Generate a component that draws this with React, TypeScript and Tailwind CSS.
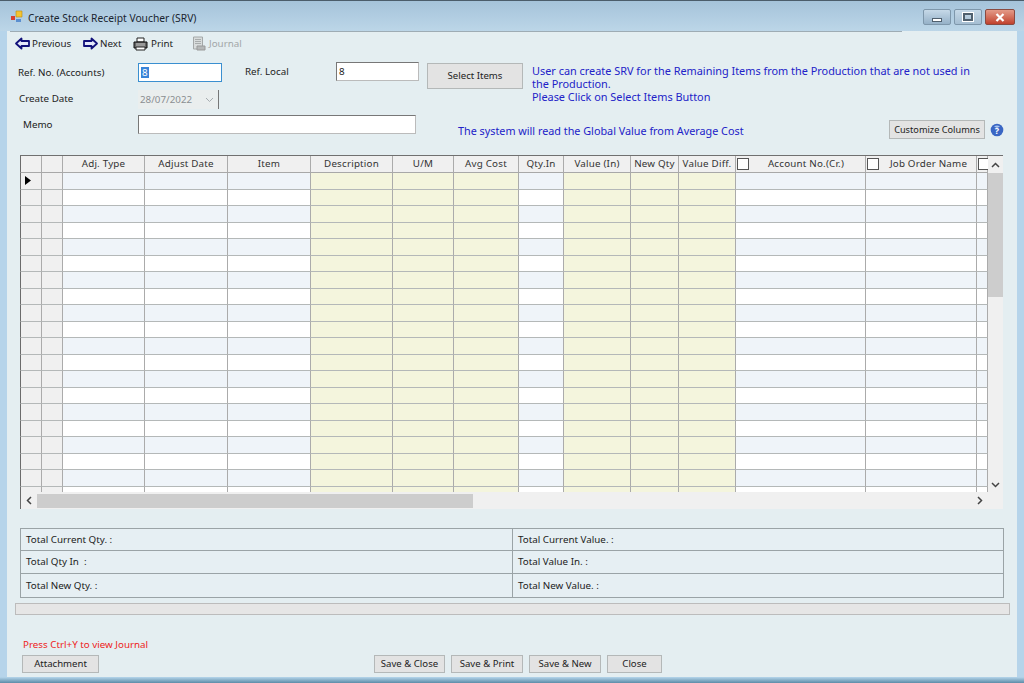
const GRID = "grid grid-cols-[22px_21px_82px_83px_83px_82px_61px_65px_45px_67px_48px_57px_130px_111px_11px]";

const heads = ["", "", "Adj. Type", "Adjust Date", "Item", "Description", "U/M", "Avg Cost", "Qty.In", "Value (In)", "New Qty", "Value Diff.", "Account No.(Cr.)", "Job Order Name", ""];
const yellow = [5, 6, 7, 9, 10, 11];

function Check({ className }: { className: string }) {
  return <span className={"block w-[12px] h-[12px] bg-white border border-[#555] shrink-0 " + className} />;
}

function Arrow({ flip }: { flip?: boolean }) {
  return (
    <svg width="15" height="13" viewBox="0 0 15 13" className={flip ? "-scale-x-100" : ""}>
      <path d="M1 6.5 6.5 1.5 V4 H14 V9 H6.5 V11.5 Z" fill="#e4e8fa" stroke="#10107a" strokeWidth="1.8" strokeLinejoin="round" />
    </svg>
  );
}

function Printer() {
  return (
    <svg width="15" height="14" viewBox="0 0 15 14">
      <path d="M4 1h7v4H4z" fill="#fff" stroke="#222" />
      <path d="M1 5h13v6H1z" fill="#666" stroke="#111" />
      <path d="M3 7h9M3 9h9" stroke="#ccc" />
      <path d="M3 10h9v3H3z" fill="#fff" stroke="#222" />
    </svg>
  );
}

function JournalIcon() {
  return (
    <svg width="14" height="15" viewBox="0 0 14 15">
      <path d="M1.5 1h9v12h-9z" fill="#d8dcdc" stroke="#a4a8a8" />
      <path d="M3 3.500h6M3 5.500h6M3 7.500h6" stroke="#a8acac" />
      <path d="M5 10h8v4H5z" fill="#b5b8b8" stroke="#999" />
    </svg>
  );
}

function Btn({ w, h = "h-[18px]", text = "text-[9.600px]", children }: { w: string; h?: string; text?: string; children: string }) {
  return (
    <div className={w + " " + h + " " + text + " flex items-center justify-center whitespace-nowrap bg-[#e3e3e3] border border-[#b4b8b8] text-[#222] shrink-0"}>
      {children}
    </div>
  );
}

function WinBtn({ className, children }: { className: string; children: React.ReactNode }) {
  return (
    <div className={"h-[16px] flex items-center justify-center rounded-[2px] border border-[#7e97ab] " + className}>{children}</div>
  );
}

function Row({ i }: { i: number }) {
  const alt = i % 2 === 0;
  return (
    <div className={GRID + " h-[16.500px] shrink-0"}>
      {heads.map((_, c) => {
        const bg = c < 2 ? "bg-[#f0f0f0]" : yellow.includes(c) ? "bg-[#f4f5dd]" : alt ? "bg-[#eff4f9]" : "bg-white";
        const left = c === 0 ? "border-l border-l-[#6b6b6b]" : "";
        return (
          <div key={c} className={bg + " " + left + " relative border-r border-b border-r-[#ababab] border-b-[#b4b8b8] flex items-center pl-[4px]"}>
            {c === 0 && i === 0 && (
              <svg width="6" height="9" viewBox="0 0 6 9"><path d="M0 0 6 4.500 0 9Z" fill="#000" /></svg>
            )}
          </div>
        );
      })}
    </div>
  );
}

function TotalCell({ text, wide, h }: { text: string; wide?: boolean; h: string }) {
  return <div className={h + (wide ? " w-[492px] border-r border-r-[#9aa3a6]" : " flex-1") + " flex items-center pl-[5px] text-[#222]"}>{text}</div>;
}

export default function App() {
  return (
    <div className="w-[1024px] h-[683px] overflow-hidden flex flex-col bg-[#b6d4ea] text-[9.800px] text-[#222] font-['Noto_Sans','DejaVu_Sans',sans-serif] leading-none">
      <div className="h-[31px] shrink-0 flex items-start border-t border-t-[#4b5d6b] bg-gradient-to-b from-[#a5c3da] to-[#bcd6e8]">
        <svg width="14" height="14" viewBox="0 0 14 14" className="ml-[10px] mt-[9px] shrink-0">
          <path d="M6 1h6v6H6z" fill="#f4c430" stroke="#b88a10" strokeWidth=".6" />
          <path d="M1 6h4v4H1z" fill="#d84030" />
          <path d="M6 9h5v3H6z" fill="#5b8fd0" />
        </svg>
        <div className="ml-[4px] mt-[12px] text-[10.300px] text-[#1a2530]">Create Stock Receipt Voucher (SRV)</div>
        <div className="ml-auto mr-[9px] mt-[8px] flex gap-[3px]">
          <WinBtn className="w-[28px] bg-gradient-to-b from-[#c6d9e8] to-[#95b1c8]">
            <span className="block w-[10px] h-[4px] mt-[5px] bg-white border border-[#50606e]" />
          </WinBtn>
          <WinBtn className="w-[28px] bg-gradient-to-b from-[#c6d9e8] to-[#a5bed2]">
            <span className="block w-[10px] h-[8px] bg-transparent border-2 border-[#50606e] outline outline-1 outline-white" />
          </WinBtn>
          <WinBtn className="w-[30px] bg-gradient-to-b from-[#e39a88] to-[#c0402c] border-[#8a4a40]">
            <svg width="10" height="9" viewBox="0 0 10 9"><path d="M1.500 1 8.500 8M8.500 1 1.500 8" stroke="#fff" strokeWidth="2.200" /></svg>
          </WinBtn>
        </div>
      </div>

      <div className="flex-1 min-h-0 flex flex-col mx-[7px] bg-[#e4eef1]">
        <div className="ml-[3px] w-[892px] h-px bg-[#9eacb4] shrink-0" />
        <div className="h-[23px] shrink-0 flex items-center pl-[8px]">
          <Arrow /><span className="ml-[2px] w-[39px]">Previous</span>
          <span className="ml-[12px]"><Arrow flip /></span><span className="ml-[2px] w-[23px]">Next</span>
          <span className="ml-[10px]"><Printer /></span><span className="ml-[3px] w-[22px]">Print</span>
          <span className="ml-[19px]"><JournalIcon /></span><span className="ml-[3px] text-[#a2a6a8]">Journal</span>
        </div>

        <div className="h-[100px] shrink-0 pt-[8px] flex">
          <div className="w-[420px] shrink-0 flex flex-col">
            <div className="flex h-[19px] items-center">
              <span className="ml-[11px] w-[120px]">Ref. No. (Accounts)</span>
              <div className="w-[84px] h-[19px] bg-white border border-[#3a8fd0] flex items-center pl-[2px]">
                <span className="bg-[#3a84d8] text-white px-[1px] leading-[11px]">8</span>
              </div>
              <span className="ml-[23px] w-[91px] -mt-[1px]">Ref. Local</span>
              <div className="w-[83px] h-[19px] -mt-[2px] bg-white border border-[#777] border-b-[#bbb] border-r-[#bbb] flex items-center pl-[2px]">8</div>
            </div>
            <div className="flex h-[19px] items-center mt-[8px]">
              <span className="ml-[12px] w-[119px] -mt-[2px]">Create Date</span>
              <div className="w-[81px] h-[19px] bg-[#eaeeee] border-r border-r-[#777] flex items-center pl-[2px] pr-[4px] justify-between text-[#8b8f92]">
                <span>28/07/2022</span>
                <svg width="9" height="6" viewBox="0 0 9 6"><path d="M1 1 4.500 4.500 8 1" fill="none" stroke="#a6acb0" /></svg>
              </div>
            </div>
            <div className="flex h-[19px] items-center mt-[6px]">
              <span className="ml-[16px] w-[115px]">Memo</span>
              <div className="w-[278px] h-[19px] bg-white border border-[#777] border-b-[#bbb] border-r-[#bbb]" />
            </div>
          </div>
          <div className="flex-1 flex flex-col min-w-0">
            <div className="flex h-[49px] shrink-0">
              <div><Btn w="w-[96px]" h="h-[26px]">Select Items</Btn></div>
              <div className="ml-[9px] mt-[1px] w-[446px] text-[#2222c8] text-[10.900px] leading-[13px]">
                User can create SRV for the Remaining Items from the Production that are not used in the Production.<br />Please Click on Select Items Button
              </div>
            </div>
            <div className="flex items-start">
              <div className="ml-[31px] mt-[14px] w-[431px] text-[#2222c8] text-[10.800px]">The system will read the Global Value from Average Cost</div>
              <div className="mt-[8px]"><Btn w="w-[96px]" h="h-[19px]" text="text-[9.200px]">Customize Columns</Btn></div>
              <svg width="14" height="14" viewBox="0 0 14 14" className="ml-[5px] mt-[11px] shrink-0">
                <circle cx="7" cy="7" r="6.300" fill="#3a66c4" />
                <path d="M4 3.500A5 5 0 0 1 10 3.500L7 5Z" fill="#a8c4ee" />
                <text x="7" y="10.500" textAnchor="middle" fontSize="9" fontWeight="700" fill="#fff">?</text>
              </svg>
            </div>
          </div>
        </div>

        <div className="ml-[13px] w-[983px] h-[354px] shrink-0 flex flex-col bg-[#f0f0f0] border-t border-t-[#707070]">
          <div className="flex h-[336px] shrink-0">
            <div className="w-[968px] overflow-hidden flex flex-col">
              <div className={GRID + " h-[17px] shrink-0"}>
                {heads.map((h, c) => (
                  <div key={c} className={"bg-[#f0f0f0] border-r border-b border-r-[#ababab] border-b-[#a8a8a8] flex items-center justify-center relative text-[#333] tracking-[0.2px] " + (c === 0 ? "border-l border-l-[#6b6b6b]" : "")}>
                    {(c === 12 || c === 13 || c === 14) && <Check className="absolute left-[1px] top-[2px]" />}
                    <span className={c === 13 ? "ml-[15px]" : c === 12 ? "ml-[11px]" : ""}>{h}</span>
                  </div>
                ))}
              </div>
              {Array.from({ length: 20 }, (_, i) => <Row key={i} i={i} />)}
            </div>
            <div className="flex-1 flex flex-col items-center">
              <svg width="9" height="6" viewBox="0 0 9 6" className="mt-[6px] mb-[5px]"><path d="M1 5 4.500 1.500 8 5" fill="none" stroke="#444" strokeWidth="1.500" /></svg>
              <div className="w-full h-[124px] bg-[#cdcdcd]" />
              <svg width="9" height="6" viewBox="0 0 9 6" className="mt-auto mb-[4px]"><path d="M1 1 4.500 4.500 8 1" fill="none" stroke="#444" strokeWidth="1.500" /></svg>
            </div>
          </div>
          <div className="flex-1 flex items-center border-l border-l-[#6b6b6b]">
            <svg width="6" height="9" viewBox="0 0 6 9" className="ml-[5px]"><path d="M5 1 1.500 4.500 5 8" fill="none" stroke="#444" strokeWidth="1.500" /></svg>
            <div className="ml-[5px] w-[436px] h-[14px] bg-[#cdcdcd]" />
            <svg width="6" height="9" viewBox="0 0 6 9" className="ml-[504px]"><path d="M1 1 4.500 4.500 1 8" fill="none" stroke="#444" strokeWidth="1.500" /></svg>
          </div>
        </div>

        <div className="ml-[13px] mt-[19px] w-[984px] shrink-0 flex flex-col border border-[#9aa3a6] bg-[#e6eff3]">
          <div className="flex border-b border-b-[#9aa3a6]">
            <TotalCell wide h="h-[21px]" text="Total Current Qty. :" /><TotalCell h="h-[21px]" text="Total Current Value. :" />
          </div>
          <div className="flex border-b border-b-[#9aa3a6]">
            <TotalCell wide h="h-[22px]" text={"Total Qty In \u00a0:"} /><TotalCell h="h-[22px]" text="Total Value In. :" />
          </div>
          <div className="flex">
            <TotalCell wide h="h-[23px]" text="Total New Qty. :" /><TotalCell h="h-[23px]" text="Total New Value. :" />
          </div>
        </div>

        <div className="ml-[8px] mt-[5px] w-[995px] h-[12px] shrink-0 bg-[#e6e6e6] border border-[#bcbcbc]" />

        <div className="ml-[16px] mt-[25px] text-[#ee2222] h-[10px] shrink-0">Press Ctrl+Y to view Journal</div>

        <div className="mt-[5px] h-[18px] shrink-0 flex">
          <div className="ml-[15px]"><Btn w="w-[77px]">Attachment</Btn></div>
          <div className="ml-[275px]"><Btn w="w-[71px]">Save &amp; Close</Btn></div>
          <div className="ml-[6px]"><Btn w="w-[72px]">Save &amp; Print</Btn></div>
          <div className="ml-[6px]"><Btn w="w-[72px]">Save &amp; New</Btn></div>
          <div className="ml-[6px]"><Btn w="w-[55px]">Close</Btn></div>
        </div>
      </div>
      <div className="h-[6px] shrink-0 bg-gradient-to-b from-[#b6d6ec] to-[#5d8ca8]" />
    </div>
  );
}
